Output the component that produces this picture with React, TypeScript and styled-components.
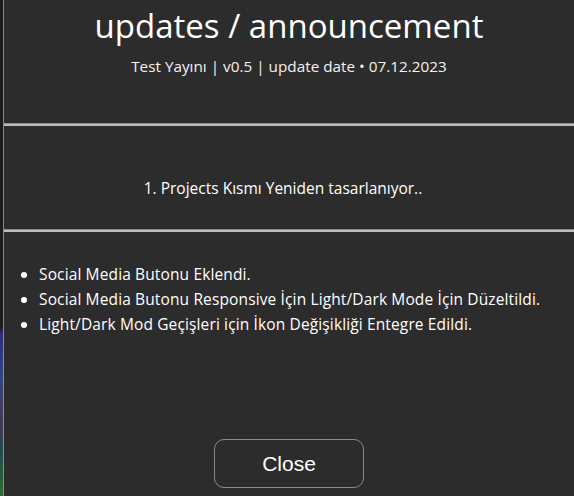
import React from "react";
import styled, { createGlobalStyle } from "styled-components";

const GlobalStyle = createGlobalStyle`
  html, body {
    margin: 0;
    padding: 0;
    height: 496px;
    overflow: hidden;
  }
  body {
    background: linear-gradient(
      to bottom,
      #1c1c1c 0px,
      #1c1c1c 326px,
      #2a2d86 334px,
      #34467c 380px,
      #4a3558 420px,
      #1e4a4c 450px,
      #2f6d34 496px
    );
  }
`;

const Modal = styled.div`
  margin-left: 3px;
  height: 496px;
  box-sizing: border-box;
  border-left: 1px solid #8a8a8a;
  background: #2c2c2c;
  color: #fff;
  font-family: "Open Sans", "Noto Sans", sans-serif;
  display: flex;
  flex-direction: column;
`;

const Header = styled.header`
  height: 123px;
  box-sizing: border-box;
  padding-top: 4px;
  text-align: center;
`;

const Title = styled.h1`
  margin: 0;
  font-size: 33px;
  font-weight: 400;
  line-height: 44px;
`;

const Subtitle = styled.p`
  margin: 8px 0 0;
  font-size: 15.3px;
  line-height: 20px;
  color: #f2f2f2;
`;

const Divider = styled.hr`
  margin: 0;
  height: 2px;
  border: none;
  border-top: 1px solid #8c8c8c;
  background: #bdbdbd;
`;

const Notice = styled.section`
  height: 103px;
  box-sizing: border-box;
  padding-top: 52px;
`;

const NoticeList = styled.ol`
  margin: 0;
  padding: 0 12px 0 0;
  list-style-position: inside;
  text-align: center;
  font-size: 15.5px;
  line-height: 20px;
`;

const Changes = styled.ul`
  margin: 0;
  padding: 30px 0 0 35px;
  font-size: 15.5px;
  letter-spacing: 0.13px;
  line-height: 25px;
`;

const Footer = styled.footer`
  flex: 1;
  display: flex;
  align-items: flex-end;
  justify-content: center;
  padding-bottom: 8px;
`;

const CloseButton = styled.button`
  width: 150px;
  height: 49px;
  border: 1px solid #8a8a8a;
  border-radius: 10px;
  background: transparent;
  color: #fff;
  font-family: "Liberation Sans", Arial, sans-serif;
  font-size: 21px;
  cursor: pointer;
`;

const changes = [
  "Social Media Butonu Eklendi.",
  "Social Media Butonu Responsive İçin Light/Dark Mode İçin Düzeltildi.",
  "Light/Dark Mod Geçişleri için İkon Değişikliği Entegre Edildi.",
];

const App: React.FC = () => {
  return (
    <>
      <GlobalStyle />
      <Modal>
        <Header>
          <Title>updates / announcement</Title>
          <Subtitle>Test Yayını | v0.5 | update date • 07.12.2023</Subtitle>
        </Header>
        <Divider />
        <Notice>
          <NoticeList>
            <li>Projects Kısmı Yeniden tasarlanıyor..</li>
          </NoticeList>
        </Notice>
        <Divider />
        <Changes>
          {changes.map((item) => (
            <li key={item}>{item}</li>
          ))}
        </Changes>
        <Footer>
          <CloseButton>Close</CloseButton>
        </Footer>
      </Modal>
    </>
  );
};

export default App;
